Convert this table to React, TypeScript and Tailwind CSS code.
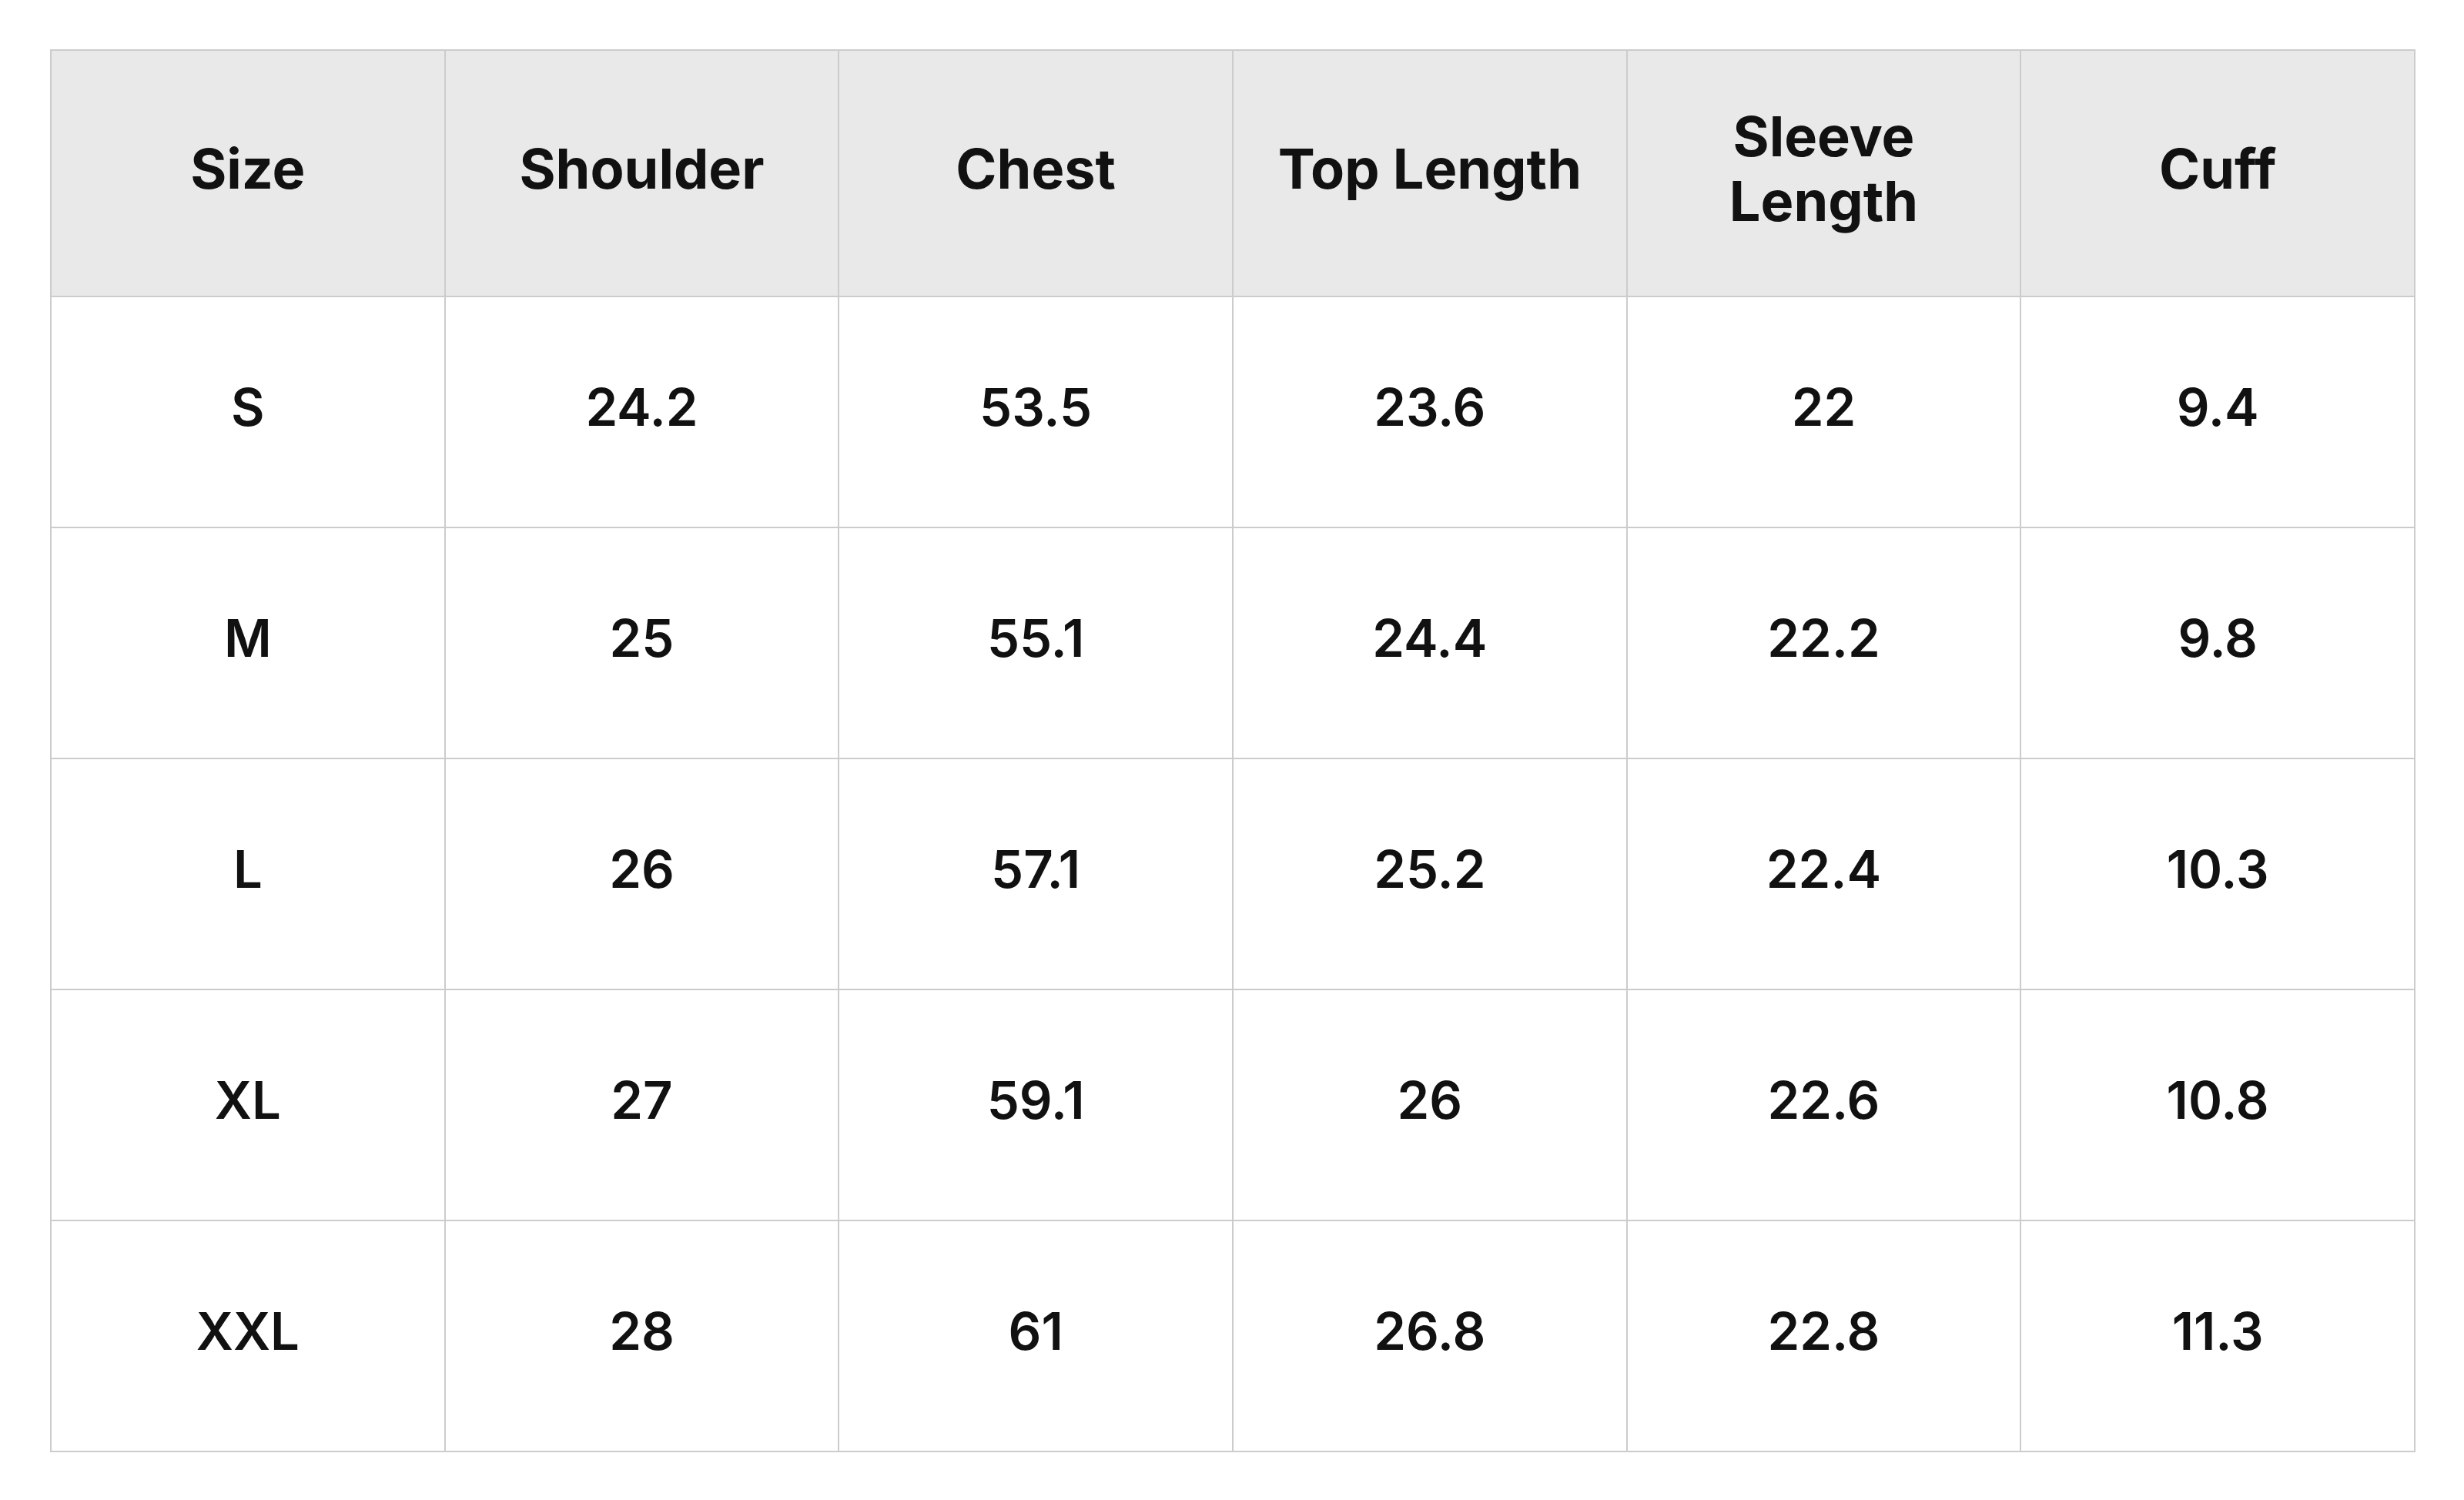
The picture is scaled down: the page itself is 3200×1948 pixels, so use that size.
const HEADERS = ['Size', 'Shoulder', 'Chest', 'Top Length', 'Sleeve Length', 'Cuff'];

const ROWS: string[][] = [
  ['S', '24.2', '53.5', '23.6', '22', '9.4'],
  ['M', '25', '55.1', '24.4', '22.2', '9.8'],
  ['L', '26', '57.1', '25.2', '22.4', '10.3'],
  ['XL', '27', '59.1', '26', '22.6', '10.8'],
  ['XXL', '28', '61', '26.8', '22.8', '11.3'],
];

export default function App() {
  return (
    <div className="min-h-screen w-[3200px] bg-white pt-[64px] pl-[65px] font-['Inter','Liberation_Sans',sans-serif] text-[#111111]">
      {/* Size chart */}
      <div className="grid w-[3072px] grid-cols-6 border-t-2 border-l-2 border-[#cccccc]">
        {HEADERS.map((h) => (
          <div
            key={h}
            className="flex h-[320px] items-center justify-center border-r-2 border-b-2 border-[#cccccc] bg-[#e9e9e9] px-[44px] pb-[12px] text-center text-[72px] font-bold leading-[1.17]"
          >
            {h}
          </div>
        ))}
        {ROWS.map((row) =>
          row.map((cell, i) => (
            <div
              key={row[0] + i}
              className="flex h-[300px] items-center justify-center border-r-2 border-b-2 border-[#cccccc] pb-[12px] text-[67px] font-semibold"
            >
              {cell}
            </div>
          ))
        )}
      </div>
    </div>
  );
}
